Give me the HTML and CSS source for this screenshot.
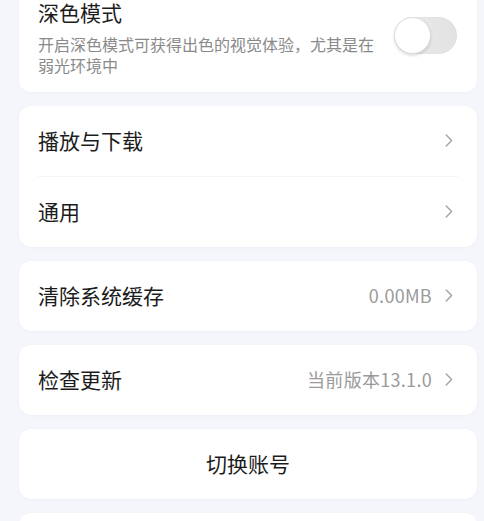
FILE: index.html
```html
<!DOCTYPE html>
<html lang="zh-CN">
<head>
  <meta charset="UTF-8">
  <title>设置</title>
  <link rel="stylesheet" href="styles.css">
</head>
<body>

<div class="settings">
  <!-- dark mode -->
  <div class="card card-top">
    <div class="dark-row">
      <div class="dark-text">
        <div class="row-title">深色模式</div>
        <div class="row-desc">开启深色模式可获得出色的视觉体验，尤其是在弱光环境中</div>
      </div>
      <div class="switch"><span class="knob"></span></div>
    </div>
  </div>

  <div class="card">
    <div class="row">
      <span class="row-title">播放与下载</span>
      <span class="row-right"><svg class="chev" width="8" height="13" viewBox="0 0 8 13"><path d="M1.2 1 L6.6 6.5 L1.2 12" fill="none" stroke="#a3a3a3" stroke-width="1.4" stroke-linecap="round" stroke-linejoin="round"/></svg></span>
    </div>
    <div class="divider"></div>
    <div class="row">
      <span class="row-title">通用</span>
      <span class="row-right"><svg class="chev" width="8" height="13" viewBox="0 0 8 13"><path d="M1.2 1 L6.6 6.5 L1.2 12" fill="none" stroke="#a3a3a3" stroke-width="1.4" stroke-linecap="round" stroke-linejoin="round"/></svg></span>
    </div>
  </div>

  <div class="card">
    <div class="row">
      <span class="row-title">清除系统缓存</span>
      <span class="row-right"><span class="row-value">0.00MB</span><svg class="chev" width="8" height="13" viewBox="0 0 8 13"><path d="M1.2 1 L6.6 6.5 L1.2 12" fill="none" stroke="#a3a3a3" stroke-width="1.4" stroke-linecap="round" stroke-linejoin="round"/></svg></span>
    </div>
  </div>

  <div class="card">
    <div class="row">
      <span class="row-title">检查更新</span>
      <span class="row-right"><span class="row-value">当前版本13.1.0</span><svg class="chev" width="8" height="13" viewBox="0 0 8 13"><path d="M1.2 1 L6.6 6.5 L1.2 12" fill="none" stroke="#a3a3a3" stroke-width="1.4" stroke-linecap="round" stroke-linejoin="round"/></svg></span>
    </div>
  </div>

  <div class="card">
    <div class="row row-center">
      <span class="row-title">切换账号</span>
    </div>
  </div>

  <!-- next card, cut off at the bottom -->
  <div class="card">
    <div class="row row-center"></div>
  </div>
</div>

</body>
</html>
```

FILE: styles.css
```css
body {
  margin: 0;
  background-color: #f4f6fb;
  font-family: "Noto Sans CJK SC", "Noto Sans", sans-serif;
  color: #1c1c1c;
  height: 521px;
  overflow: hidden;
}
.settings {
  display: flex;
  flex-direction: column;
  gap: 14px;
  padding: 0 7px 0 19px;
}
.card {
  background-color: #fff;
  border-radius: 12px;
  box-shadow: 0 1px 3px rgba(60, 80, 120, 0.04);
}
.card-top {
  border-top-left-radius: 0;
  border-top-right-radius: 0;
}
.dark-row {
  display: flex;
  align-items: flex-start;
  padding: 0 20px 16px 19px;
}
.dark-text {
  width: 340px;
}
.dark-row .row-title {
  line-height: 24px;
}
.row-desc {
  margin-top: 10px;
  font-size: 16px;
  line-height: 21px;
  color: #8a8a8a;
}
.switch {
  margin-left: auto;
  margin-top: 17px;
  width: 63px;
  height: 37px;
  border-radius: 19px;
  background: linear-gradient(90deg, #ececec, #e2e2e2);
  box-shadow: inset 0 0 2px rgba(0,0,0,0.06);
  position: relative;
}
.knob {
  position: absolute;
  left: 0;
  top: 0;
  width: 35px;
  height: 35px;
  border-radius: 50%;
  background: #fff;
  border: 1px solid #dcdcdc;
  box-shadow: 0 2px 3px rgba(0,0,0,0.12);
}
.row {
  height: 70px;
  box-sizing: border-box;
  display: flex;
  align-items: center;
  justify-content: space-between;
  padding: 0 24px 3px 19px;
}
.row-center {
  justify-content: center;
  padding: 0 0 3px;
}
.row-title {
  font-size: 21px;
}
.row-right {
  display: flex;
  align-items: center;
  gap: 13px;
}
.row-value {
  font-size: 18px;
  letter-spacing: 0.3px;
  color: #9a9a9a;
}
.chev {
  display: block;
  margin-top: 2px;
}
.divider {
  height: 1px;
  margin: 0 19px;
  background-color: #f4f5f7;
}
```
